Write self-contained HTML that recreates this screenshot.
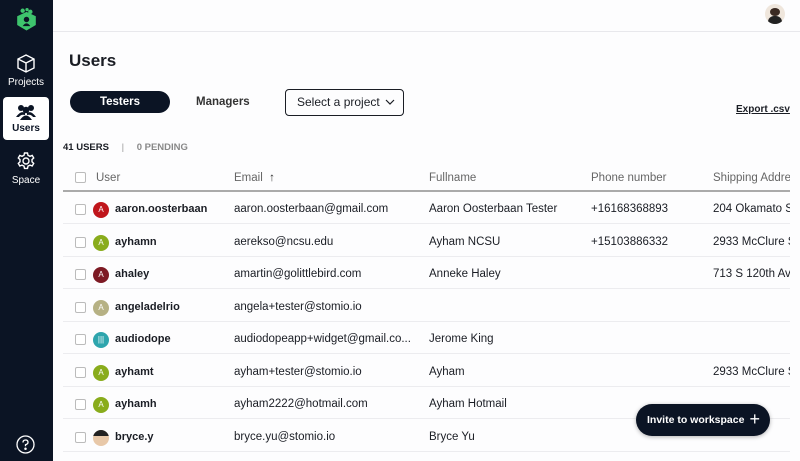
<!DOCTYPE html>
<html><head><style>
*{box-sizing:border-box;margin:0;padding:0}
body{width:800px;height:461px;overflow:hidden;background:#fdfdfe;font-family:"Liberation Sans",sans-serif;color:#1a1d24;position:relative}
.side{position:absolute;left:0;top:0;width:53px;height:461px;background:#0b1424}
.nav{position:absolute;left:3px;width:46px;text-align:center;color:#fff;font-size:10px}
.top{position:absolute;left:53px;top:0;right:0;height:32px;border-bottom:1px solid #e8e8ec}
.abs{position:absolute;white-space:nowrap}
.cb{position:absolute;left:75px;width:11px;height:11px;border:1px solid #bbb;border-radius:2px;background:#fff}
.row{position:absolute;left:63px;width:727px;height:32px;border-bottom:1px solid #ececef;font-size:11.5px;overflow:hidden}
.row span{position:absolute;top:11px;white-space:nowrap}
.av{position:absolute;left:30px;top:10px;width:16px;height:16px;border-radius:50%;color:#fff;font-size:8px;text-align:center;line-height:16px}
.u{left:52px;font-weight:bold;font-size:11px}
.e{left:171px}.f{left:366px}.p{left:528px}.s{left:650px}
</style></head><body>
<div class="side">
<svg class="abs" style="left:15px;top:7px" width="23" height="25" viewBox="0 0 21 22"><circle cx="7" cy="3" r="2" fill="#3ec46d"/><circle cx="11" cy="2" r="1.5" fill="#3ec46d"/><circle cx="14" cy="4" r="2" fill="#3ec46d"/><path d="M2 8 L10.5 4 L19 8 V16 L10.5 21 L2 16Z" fill="#3ec46d"/><circle cx="10.5" cy="11" r="2.5" fill="#0b1424"/><path d="M7 17 Q10.5 12 14 17" fill="#0b1424"/></svg>
<div class="nav" style="top:54px"><svg width="18" height="19" viewBox="0 0 18 19" fill="none" stroke="#fff" stroke-width="1.4"><path d="M9 1 L17 5 V14 L9 18 L1 14 V5Z M1 5 L9 9 L17 5 M9 9 V18"/></svg><div style="margin-top:1px">Projects</div></div>
<div class="nav" style="top:97px;height:43px;background:#fff;border-radius:4px;color:#0b1424;font-weight:bold;padding-top:7px"><svg width="20" height="16" viewBox="0 0 20 16" fill="#0b1424"><circle cx="5" cy="4" r="3"/><circle cx="15" cy="4" r="3"/><circle cx="10" cy="6" r="3.3"/><path d="M0 13 Q5 6 9 9 L9 11 Q5 10 3 13Z M20 13 Q15 6 11 9 L11 11 Q15 10 17 13Z M4 16 Q10 7 16 16Z"/></svg><div>Users</div></div>
<div class="nav" style="top:152px"><svg width="18" height="18" viewBox="0 0 18 18" fill="none" stroke="#fff" stroke-width="1.4"><circle cx="9" cy="9" r="3"/><path d="M7.5 1h3l.5 2.3 2 1 2.2-.9 1.5 2.6-1.7 1.6v2.2l1.7 1.6-1.5 2.6-2.2-.9-2 1-.5 2.3h-3l-.5-2.3-2-1-2.2.9-1.5-2.6 1.7-1.6V7.6L1.3 6 2.8 3.4l2.2.9 2-1z"/></svg><div style="margin-top:2px">Space</div></div>
<svg class="abs" style="left:16px;top:435px" width="19" height="19" viewBox="0 0 19 19" fill="none" stroke="#fff" stroke-width="1.3"><circle cx="9.5" cy="9.5" r="8.5"/><path d="M7 7.5 Q7 5 9.5 5 Q12 5 12 7.2 Q12 9 9.5 9.7 V11.3"/><circle cx="9.5" cy="13.8" r=".6" fill="#fff"/></svg>
</div>
<div class="top"></div>
<div class="abs" style="left:765px;top:4px;width:20px;height:20px;border-radius:50%;background:#efe6dc;overflow:hidden"><div style="position:absolute;left:5px;top:4px;width:10px;height:8px;border-radius:50%;background:#3a2a22"></div><div style="position:absolute;left:3px;top:12px;width:14px;height:10px;border-radius:6px 6px 0 0;background:#222"></div></div>
<div class="abs" style="left:69px;top:51px;font-size:17px;font-weight:bold">Users</div>
<div class="abs" style="left:70px;top:91px;width:100px;height:22px;border-radius:11px;background:#0b1424;color:#fff;font-weight:bold;font-size:11.5px;text-align:center;line-height:22px">Testers</div>
<div class="abs" style="left:196px;top:96px;font-weight:bold;font-size:11.5px;color:#333">Managers</div>
<div class="abs" style="left:285px;top:89px;width:119px;height:27px;border:1px solid #1a1d24;border-radius:4px;font-size:12px;line-height:25px;padding-left:11px">Select a project<svg style="position:absolute;right:8px;top:9px" width="10" height="6" viewBox="0 0 10 6" fill="none" stroke="#1a1d24" stroke-width="1.2"><path d="M1 1 L5 5 L9 1"/></svg></div>
<div class="abs" style="left:736px;top:104px;font-size:10px;font-weight:bold;text-decoration:underline">Export .csv</div>
<div class="abs" style="left:63px;top:142px;font-size:9.5px;font-weight:bold">41 USERS <span style="color:#999;margin:0 10px 0 10px;font-weight:normal">|</span> <span style="color:#888">0 PENDING</span></div>
<div class="cb" style="top:172px"></div>
<div class="abs" style="left:96px;top:172px;font-size:11.5px;color:#666">User</div>
<div class="abs" style="left:234px;top:172px;font-size:11.5px;color:#666">Email &nbsp;<b style="color:#333">↑</b></div>
<div class="abs" style="left:429px;top:172px;font-size:11.5px;color:#666">Fullname</div>
<div class="abs" style="left:591px;top:172px;font-size:11.5px;color:#666">Phone number</div>
<div class="abs" style="left:713px;top:172px;font-size:11.5px;color:#666;width:77px;overflow:hidden">Shipping Address</div>
<div class="abs" style="left:63px;top:190px;width:727px;height:2px;background:#aaa"></div>
<div class="row" style="top:192px"><div class="cb" style="left:12px;top:12px"></div><div class="av" style="background:#c0161c">A</div><span class="u">aaron.oosterbaan</span><span class="e">aaron.oosterbaan@gmail.com</span><span class="f">Aaron Oosterbaan Tester</span><span class="p">+16168368893</span><span class="s">204 Okamato St</span></div>
<div class="row" style="top:225px"><div class="cb" style="left:12px;top:12px"></div><div class="av" style="background:#89ac1c">A</div><span class="u">ayhamn</span><span class="e">aerekso@ncsu.edu</span><span class="f">Ayham NCSU</span><span class="p">+15103886332</span><span class="s">2933 McClure S</span></div>
<div class="row" style="top:257px"><div class="cb" style="left:12px;top:12px"></div><div class="av" style="background:#7d1a24">A</div><span class="u">ahaley</span><span class="e">amartin@golittlebird.com</span><span class="f">Anneke Haley</span><span class="s">713 S 120th Ave</span></div>
<div class="row" style="top:290px"><div class="cb" style="left:12px;top:12px"></div><div class="av" style="background:#b6b184">A</div><span class="u">angeladelrio</span><span class="e">angela+tester@stomio.io</span></div>
<div class="row" style="top:322px"><div class="cb" style="left:12px;top:12px"></div><div class="av" style="background:#2ea5ad">|||</div><span class="u">audiodope</span><span class="e">audiodopeapp+widget@gmail.co...</span><span class="f">Jerome King</span></div>
<div class="row" style="top:355px"><div class="cb" style="left:12px;top:12px"></div><div class="av" style="background:#89ac1c">A</div><span class="u">ayhamt</span><span class="e">ayham+tester@stomio.io</span><span class="f">Ayham</span><span class="s">2933 McClure S</span></div>
<div class="row" style="top:387px"><div class="cb" style="left:12px;top:12px"></div><div class="av" style="background:#89ac1c">A</div><span class="u">ayhamh</span><span class="e">ayham2222@hotmail.com</span><span class="f">Ayham Hotmail</span></div>
<div class="row" style="top:420px"><div class="cb" style="left:12px;top:12px"></div><div class="av" style="background:#e8c8a8;overflow:hidden"><div style="height:6px;background:#222"></div></div><span class="u">bryce.y</span><span class="e">bryce.yu@stomio.io</span><span class="f">Bryce Yu</span></div>
<div class="abs" style="left:636px;top:404px;width:134px;height:32px;border-radius:16px;background:#0b1424;color:#fff;font-size:10.5px;font-weight:bold;line-height:32px;padding-left:11px;box-shadow:0 1px 4px rgba(0,0,0,.3)">Invite to workspace<span style="font-weight:normal;font-size:18px;position:absolute;right:10px;top:-1px">+</span></div>
</body></html>
